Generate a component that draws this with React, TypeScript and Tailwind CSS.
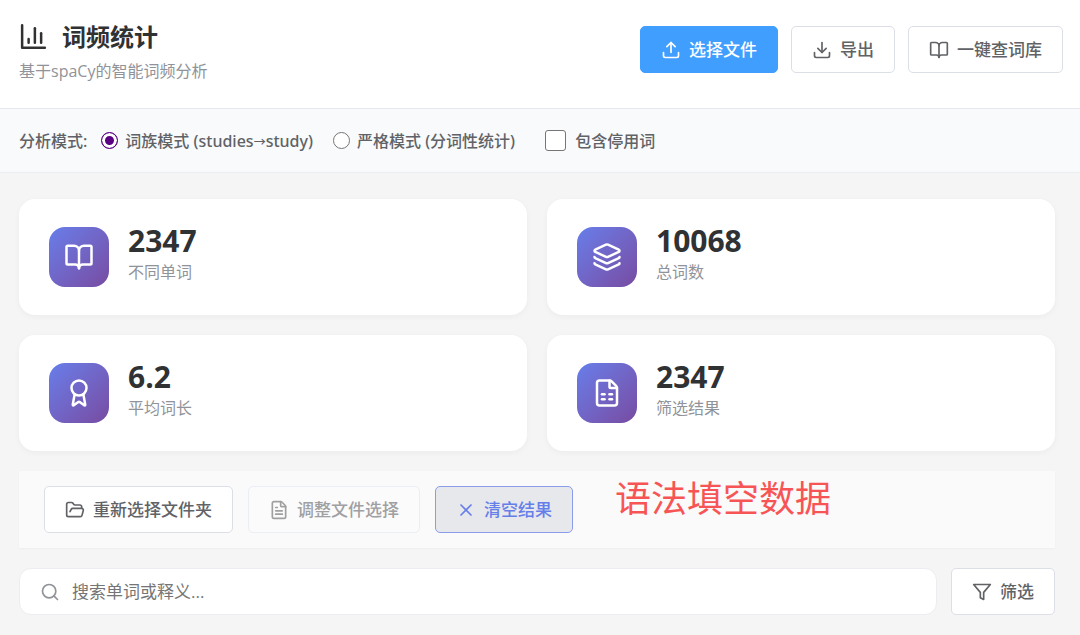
import React from "react";
import {
  Award,
  BookOpen,
  Download,
  FileSpreadsheet,
  FileText,
  FolderOpen,
  Layers,
  Search,
  Upload,
  X,
} from "lucide-react";
import type { LucideIcon } from "lucide-react";

function ChartIcon() {
  return (
    <svg className="size-[30px] shrink-0" viewBox="0 0 24 24" fill="none" stroke="currentColor" strokeWidth="2" strokeLinecap="round" strokeLinejoin="round" aria-hidden="true">
      <path d="M2.5 2.5v18h18.2" />
      <path d="M17.7 16.5V9" />
      <path d="M12.7 16.5V5" />
      <path d="M7.7 16.5v-3" />
    </svg>
  );
}

function FilterIcon() {
  return (
    <svg className="size-5 shrink-0" viewBox="0 0 24 24" fill="none" stroke="currentColor" strokeWidth="2" strokeLinecap="round" strokeLinejoin="round" aria-hidden="true">
      <polygon points="22 3 2 3 10 12.46 10 19 14 21 14 12.46 22 3" />
    </svg>
  );
}

type Variant = "primary" | "plain" | "disabled" | "active";

const variants: Record<Variant, string> = {
  primary: "border-[#409eff] bg-[#409eff] text-white",
  plain: "border-[#dcdfe6] bg-white text-[#606266]",
  disabled: "border-[#ebeef5] bg-[#fbfbfb] text-[#a0a0a2]",
  active: "border-[#8c9cec] bg-[#e6e8eb] text-[#667eea]",
};

function Button({ variant = "plain", icon, children }: { variant?: Variant; icon: React.ReactNode; children: React.ReactNode }) {
  return (
    <button
      type="button"
      disabled={variant === "disabled"}
      className={`flex h-[47px] shrink-0 items-center gap-2 whitespace-nowrap rounded-[5px] border px-5 text-[17px] font-medium ${variants[variant]}`}
    >
      {icon}
      <span>{children}</span>
    </button>
  );
}

const stats: { value: string; label: string; Icon: LucideIcon }[] = [
  { value: "2347", label: "不同单词", Icon: BookOpen },
  { value: "10068", label: "总词数", Icon: Layers },
  { value: "6.2", label: "平均词长", Icon: Award },
  { value: "2347", label: "筛选结果", Icon: FileSpreadsheet },
];

function StatCard({ value, label, Icon }: { value: string; label: string; Icon: LucideIcon }) {
  return (
    <div className="flex items-center gap-[19px] rounded-2xl bg-white px-[30px] py-[27px] shadow-[0_2px_6px_rgba(0,0,0,0.04)]">
      <div className="flex size-[60px] shrink-0 items-center justify-center rounded-2xl bg-linear-135 from-[#667eea] to-[#764ba2] text-white">
        <Icon className="size-[30px]" strokeWidth={2} />
      </div>
      <div>
        <div className="text-[30px] leading-[30px] font-bold text-[#303133]">{value}</div>
        <div className="text-base leading-8 text-[#909399]">{label}</div>
      </div>
    </div>
  );
}

export default function App() {
  return (
    <div className="min-h-screen bg-[#f5f5f5] font-['Open_Sans','Noto_Sans_CJK_SC',sans-serif] text-[#606266]">
      <header className="flex items-start justify-between border-b border-[#e4e7ed] bg-white pt-[19px] pr-[17px] pb-[25px] pl-[19px]">
        <div>
          <h1 className="flex items-center gap-[13px] text-2xl leading-9 font-bold text-[#303133]">
            <ChartIcon />
            词频统计
          </h1>
          <p className="mt-1 text-base leading-6 text-[#909399]">基于spaCy的智能词频分析</p>
        </div>
        <div className="flex gap-[13px] pt-[7px]">
          <Button variant="primary" icon={<Upload className="size-5" />}>选择文件</Button>
          <Button icon={<Download className="size-5" />}>导出</Button>
          <Button icon={<BookOpen className="size-5" />}>一键查词库</Button>
        </div>
      </header>

      <fieldset className="flex h-16 items-center border-b border-[#ebeef0] bg-[#f8fafc] px-[19px] font-['Noto_Sans','Noto_Sans_CJK_SC',sans-serif] text-base font-medium">
        <span className="mr-[14px]">分析模式:</span>
        <label className="mr-5 flex items-center gap-[7px]">
          <input type="radio" name="mode" defaultChecked className="size-[17px] appearance-none rounded-full border border-[#767676] bg-white checked:border-[#5b0082] checked:bg-[#5b0082] checked:shadow-[inset_0_0_0_3px_#fff]" />
          <span>词族模式 (studies<span className="text-xs">→</span>study)</span>
        </label>
        <label className="mr-[30px] flex items-center gap-[7px]">
          <input type="radio" name="mode" className="size-[17px] appearance-none rounded-full border border-[#767676] bg-white checked:border-[#5b0082] checked:bg-[#5b0082] checked:shadow-[inset_0_0_0_3px_#fff]" />
          严格模式 (分词性统计)
        </label>
        <label className="flex items-center gap-[9px]">
          <input type="checkbox" className="size-[21px] appearance-none rounded-[3px] border border-[#767676] bg-white checked:bg-[#409eff]" />
          包含停用词
        </label>
      </fieldset>

      <main className="flex flex-col gap-5 pt-[26px] pr-[25px] pb-5 pl-[19px]">
        <section className="grid grid-cols-2 gap-5">
          {stats.map((stat) => (
            <StatCard key={stat.label} {...stat} />
          ))}
        </section>

        <section className="flex items-center gap-[15px] bg-[#fafafa] px-[25px] py-[15px] shadow-[0_1px_2px_rgba(0,0,0,0.03)]">
          <Button icon={<FolderOpen className="size-5" />}>重新选择文件夹</Button>
          <Button variant="disabled" icon={<FileText className="size-5" />}>调整文件选择</Button>
          <Button variant="active" icon={<X className="size-5" />}>清空结果</Button>
          <strong className="-my-2 ml-[27px] self-start text-4xl leading-[42px] font-normal whitespace-nowrap text-[#f75555]">语法填空数据</strong>
        </section>

        <section className="flex gap-[14px]">
          <label className="flex min-w-0 flex-1 items-center gap-3 rounded-xl border border-[#ebedf0] bg-white px-5 text-[#909399]">
            <Search className="size-5 shrink-0" strokeWidth={2} />
            <input
              type="text"
              aria-label="搜索单词或释义"
              placeholder="搜索单词或释义..."
              className="min-w-0 flex-1 bg-transparent text-[17px] text-[#606266] outline-none placeholder:text-[#757575]"
            />
          </label>
          <Button icon={<FilterIcon />}>筛选</Button>
        </section>
      </main>
    </div>
  );
}
